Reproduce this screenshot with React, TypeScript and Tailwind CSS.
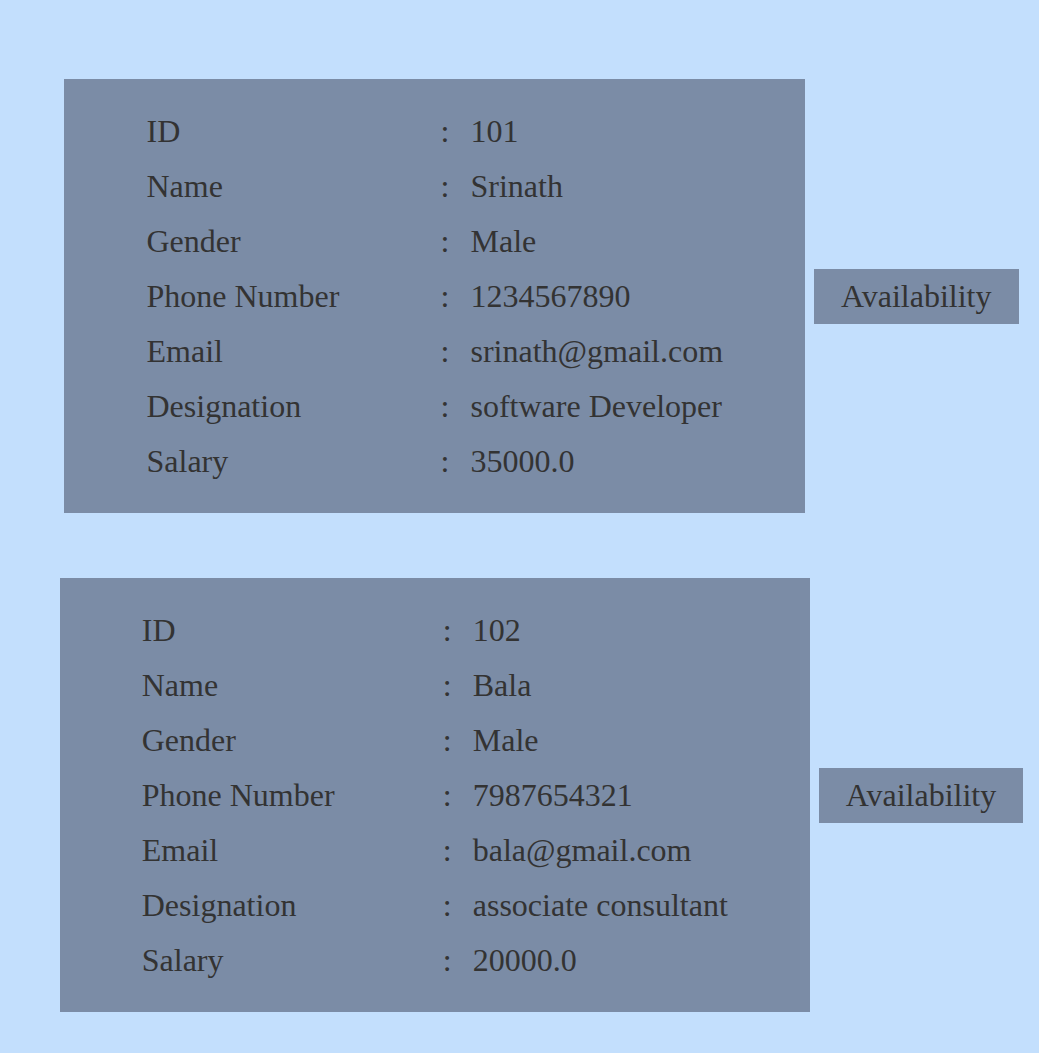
type Employee = {
  id: string;
  name: string;
  gender: string;
  phone: string;
  email: string;
  designation: string;
  salary: string;
};

const employees: Employee[] = [
  { id: "101", name: "Srinath", gender: "Male", phone: "1234567890", email: "srinath@gmail.com", designation: "software Developer", salary: "35000.0" },
  { id: "102", name: "Bala", gender: "Male", phone: "7987654321", email: "bala@gmail.com", designation: "associate consultant", salary: "20000.0" },
];

const fields: [string, keyof Employee][] = [
  ["ID", "id"],
  ["Name", "name"],
  ["Gender", "gender"],
  ["Phone Number", "phone"],
  ["Email", "email"],
  ["Designation", "designation"],
  ["Salary", "salary"],
];

function EmployeeRow({ employee, wide }: { employee: Employee; wide: boolean }) {
  return (
    <section className="flex items-center justify-center gap-[9px]">
      <div className="bg-[#7b8ca6] pt-6 pr-[82px] pb-[25px] pl-[82px]">
        <table>
          <tbody>
            {fields.map(([label, key]) => (
              <tr key={key} className="h-[55px]">
                <th scope="row" className={`p-0 text-left font-normal ${wide ? "w-[297px]" : "w-[290px]"}`}>{label}</th>
                <td className="w-[34px] p-0 pl-1">:</td>
                <td className="p-0 whitespace-nowrap">{employee[key]}</td>
              </tr>
            ))}
          </tbody>
        </table>
      </div>
      <button type="button" className="h-[55px] bg-[#7b8ca6] px-[27px]">Availability</button>
    </section>
  );
}

export default function App() {
  return (
    <main className="flex min-h-screen flex-col gap-[65px] bg-[#c3dffd] pt-[79px] pb-10 pl-11 font-['Liberation_Serif',serif] text-[32px] leading-9 text-[#333333]">
      {employees.map((employee) => (
        <EmployeeRow key={employee.id} employee={employee} wide={employee.designation.length > 18} />
      ))}
    </main>
  );
}
